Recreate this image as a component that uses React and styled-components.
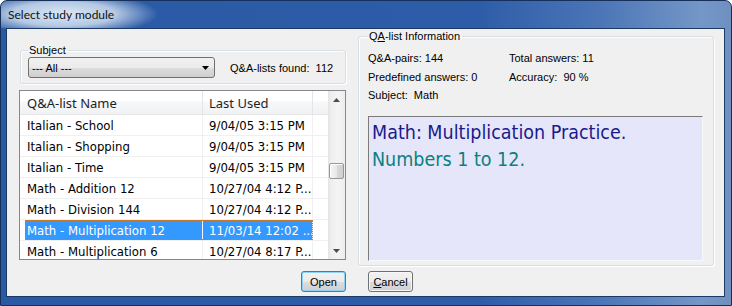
import styled, { createGlobalStyle } from 'styled-components'

const GlobalStyle = createGlobalStyle`
  html, body { margin: 0; padding: 0; background: #fff; }
  body { width: 732px; height: 306px; overflow: hidden; }
`

const uiFont = `'Liberation Sans', Arial, sans-serif`
const listFont = `'Comic Sans MS', 'DejaVu Sans Condensed', 'DejaVu Sans', sans-serif`

const rows = [
    { name: 'Italian - School', used: '9/04/05 3:15 PM' },
    { name: 'Italian - Shopping', used: '9/04/05 3:15 PM' },
    { name: 'Italian - Time', used: '9/04/05 3:15 PM' },
    { name: 'Math - Addition 12', used: '10/27/04 4:12 P...' },
    { name: 'Math - Division 144', used: '10/27/04 4:12 P...' },
    { name: 'Math - Multiplication 12', used: '11/03/14 12:02 ...', selected: true },
    { name: 'Math - Multiplication 6', used: '10/27/04 8:17 P...' },
]

const Window = styled.div`
    width: 732px;
    height: 306px;
    box-sizing: border-box;
    border: 1px solid #17305a;
    border-radius: 7px 7px 0 0;
    background: linear-gradient(to right, #2b5aa5 0%, #2d5ca8 65%, #4b75b6 82%, #7497c7 96%, #6f8fbf 100%);
    display: flex;
    flex-direction: column;
    overflow: hidden;
`

const TitleBar = styled.div`
    height: 27px;
    display: flex;
    align-items: center;
    padding-left: 7px;
    font-family: Lato, 'Noto Sans', sans-serif;
    font-size: 12px;
    color: #111;
    background: radial-gradient(ellipse 95px 22px at 62px 13px, rgba(226, 236, 246, 0.97) 0%, rgba(214, 228, 243, 0.8) 55%, rgba(214, 228, 243, 0) 100%);
`

const Client = styled.div`
    flex: 1;
    margin: 0 6px 8px 5px;
    border: 1px solid #1b3965;
    background: #f0f0f0;
    padding-left: 12px;
    display: grid;
    grid-template-columns: 327px 356px;
    grid-template-rows: 235px auto;
    column-gap: 12px;
    font-family: ${uiFont};
    font-size: 11px;
    color: #000;
`

const LeftColumn = styled.div`
    padding-top: 15px;
    display: flex;
    flex-direction: column;
`

const GroupBox = styled.fieldset`
    margin: 0 0 0 ${p => p.$inset || 0}px;
    padding: ${p => p.$pad};
    border: 1px solid #d5dfe5;
    border-radius: 3px;
    box-shadow: inset 1px 1px 0 #fff, 1px 1px 0 #fff;
    min-width: 0;
`

const Legend = styled.legend`
    padding: 0 2px 0 1px;
    line-height: 13px;
    font-size: 11px;
    color: #000;
`

const SubjectRow = styled.div`
    display: flex;
    align-items: center;
    gap: 15px;
`

const Combo = styled.div`
    width: 187px;
    height: 21px;
    box-sizing: border-box;
    border: 1px solid #707070;
    border-radius: 3px;
    background: linear-gradient(#f2f2f2 0%, #ebebeb 50%, #dddddd 51%, #cfcfcf 100%);
    display: flex;
    align-items: center;
    justify-content: space-between;
    padding: 0 5px 0 3px;
`

const ListView = styled.div`
    margin-top: 6px;
    height: 170px;
    box-sizing: border-box;
    border: 1px solid #828790;
    background: #fff;
    display: flex;
    overflow: hidden;
`

const Table = styled.div`
    flex: 1;
    overflow: hidden;
`

const Header = styled.div`
    height: 24px;
    box-sizing: border-box;
    display: grid;
    grid-template-columns: 183px 110px 14px;
    border-bottom: 1px solid #e5e5e5;
    background: linear-gradient(#ffffff 0%, #ffffff 45%, #f7f8fa 46%, #f1f2f4 100%);
    font-family: 'Noto Sans', 'Open Sans', sans-serif;
    font-size: 13px;
    color: #1e1e1e;
`

const HeaderCell = styled.div`
    display: flex;
    align-items: center;
    padding-left: ${p => p.$pad}px;
    border-right: 1px solid #e5e5e5;
`

const Row = styled.div`
    height: 21px;
    box-sizing: border-box;
    display: flex;
    border-bottom: 1px solid #f0f0f0;
    font-family: ${listFont};
    font-size: 13px;
`

const Indent = styled.div`
    width: 5px;
`

const Selection = styled.div`
    display: flex;
    background: ${p => (p.$on ? '#3399ff' : 'transparent')};
    color: ${p => (p.$on ? '#fff' : '#000')};
    outline: ${p => (p.$on ? '1px dotted #c87a30' : 'none')};
    outline-offset: -1px;
`

const Cell = styled.div`
    width: ${p => p.$w}px;
    box-sizing: border-box;
    padding-left: ${p => p.$pad}px;
    display: flex;
    align-items: center;
    white-space: nowrap;
    overflow: hidden;
    border-right: 1px solid ${p => (p.$on ? '#f4f9ff' : '#f0f0f0')};
`

const Filler = styled.div`
    width: 14px;
`

const ScrollBar = styled.div`
    width: 17px;
    display: flex;
    flex-direction: column;
    background: linear-gradient(to right, #e3e3e3 0%, #eeeeee 15%, #f4f4f4 60%, #ededed 100%);
`

const ScrollArrow = styled.div`
    height: 17px;
    display: flex;
    align-items: center;
    justify-content: center;
`

const Track = styled.div`
    flex: 1;
`

const Thumb = styled.div`
    width: 15px;
    height: 16px;
    margin-left: 1px;
    box-sizing: border-box;
    border: 1px solid #979797;
    border-radius: 2px;
    background: linear-gradient(to right, #f5f5f5 0%, #e8e8e8 50%, #d9d9d9 51%, #cfcfcf 100%);
    box-shadow: inset 1px 1px 0 #fff;
`

const RightColumn = styled.div`
    padding-top: 1px;
`

const InfoGrid = styled.div`
    padding-top: 6px;
    display: grid;
    grid-template-columns: 141px auto;
    grid-auto-rows: 18.5px;
    align-items: center;
`

const Memo = styled.div`
    margin-top: 11px;
    height: 145px;
    box-sizing: border-box;
    border: 1px solid;
    border-color: #7b7b7b #f8f8f8 #f8f8f8 #7b7b7b;
    background: #e6e6fa;
    padding: 2px 3px;
    font-family: ${listFont};
    font-size: 19.5px;
    line-height: 27px;
`

const MemoLine = styled.div`
    color: ${p => p.$color};
    white-space: nowrap;
`

const ButtonCell = styled.div`
    padding-top: 7px;
    display: flex;
    justify-content: ${p => p.$align};
    padding-left: ${p => p.$offset || 0}px;
    align-items: flex-start;
`

const Button = styled.div`
    width: 45px;
    height: 21px;
    box-sizing: border-box;
    border: 1px solid ${p => (p.$default ? '#3c7fb1' : '#707070')};
    border-radius: 3px;
    background: linear-gradient(#f2f2f2 0%, #ebebeb 50%, #dddddd 51%, #cfcfcf 100%);
    box-shadow: inset 0 0 0 1px ${p => (p.$default ? '#8fd3f5' : '#f8f8f8')};
    display: flex;
    align-items: center;
    justify-content: center;
    font-size: 11px;
`

const Underline = styled.span`
    text-decoration: underline;
`

const Arrow = ({ dir }) => (
    <svg width="7" height="4" viewBox="0 0 7 4">
        <polygon points={dir === 'up' ? '3.5,0 7,4 0,4' : '0,0 7,0 3.5,4'} fill={dir === 'combo' ? '#000' : '#4d4d4d'} />
    </svg>
)

const App = () => {
    return (
        <>
            <GlobalStyle />
            <Window>
                <TitleBar>Select study module</TitleBar>
                <Client>
                    <LeftColumn>
                        <GroupBox $inset={1} $pad="0 6px 5px 7px">
                            <Legend>Subject</Legend>
                            <SubjectRow>
                                <Combo>
                                    <span>--- All ---</span>
                                    <Arrow dir="combo" />
                                </Combo>
                                <span>Q&amp;A-lists found:&nbsp;&nbsp;112</span>
                            </SubjectRow>
                        </GroupBox>
                        <ListView>
                            <Table>
                                <Header>
                                    <HeaderCell $pad={7}>Q&amp;A-list Name</HeaderCell>
                                    <HeaderCell $pad={6}>Last Used</HeaderCell>
                                    <div />
                                </Header>
                                {rows.map(r => (
                                    <Row key={r.name}>
                                        <Indent />
                                        <Selection $on={r.selected}>
                                            <Cell $w={178} $pad={2} $on={r.selected}>{r.name}</Cell>
                                            <Cell $w={110} $pad={6}>{r.used}</Cell>
                                        </Selection>
                                        <Filler />
                                    </Row>
                                ))}
                            </Table>
                            <ScrollBar>
                                <ScrollArrow><Arrow dir="up" /></ScrollArrow>
                                <Track>
                                    <Thumb style={{ marginTop: 55 }} />
                                </Track>
                                <ScrollArrow><Arrow dir="down" /></ScrollArrow>
                            </ScrollBar>
                        </ListView>
                    </LeftColumn>
                    <RightColumn>
                        <GroupBox $pad="0 10px 4px 9px">
                            <Legend>Q<Underline>A</Underline>-list Information</Legend>
                            <InfoGrid>
                                <span>Q&amp;A-pairs: 144</span>
                                <span>Total answers: 11</span>
                                <span>Predefined answers: 0</span>
                                <span>Accuracy:&nbsp;&nbsp;90 %</span>
                                <span>Subject:&nbsp;&nbsp;Math</span>
                            </InfoGrid>
                            <Memo>
                                <MemoLine $color="#1a1a8c">Math: Multiplication Practice.</MemoLine>
                                <MemoLine $color="#0a8080">Numbers 1 to 12.</MemoLine>
                            </Memo>
                        </GroupBox>
                    </RightColumn>
                    <ButtonCell $align="flex-end">
                        <Button $default>Open</Button>
                    </ButtonCell>
                    <ButtonCell $align="flex-start" $offset={10}>
                        <Button><span><Underline>C</Underline>ancel</span></Button>
                    </ButtonCell>
                </Client>
            </Window>
        </>
    )
}

export default App
